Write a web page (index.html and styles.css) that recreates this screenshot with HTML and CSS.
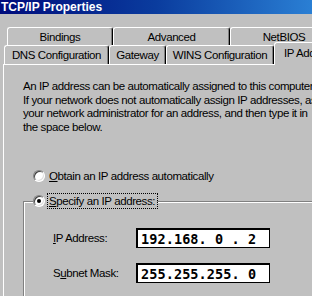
FILE: index.html
```html
<!DOCTYPE html>
<html lang="en">
<head>
  <meta charset="UTF-8" />
  <title>TCP/IP Properties</title>
  <link rel="stylesheet" href="styles.css">
</head>
<body>

  <div class="window">
    <div class="titlebar">TCP/IP Properties</div>

    <div class="tabs">
      <div class="tab-row back">
        <div class="tab tab-bindings">Bindings</div>
        <div class="tab tab-advanced">Advanced</div>
        <div class="tab tab-netbios">NetBIOS</div>
      </div>
      <div class="tab-row front">
        <div class="tab tab-dns">DNS Configuration</div>
        <div class="tab tab-gateway">Gateway</div>
        <div class="tab tab-wins">WINS Configuration</div>
        <div class="tab tab-ip active">IP Address</div>
      </div>
    </div>

    <div class="panel">
      <p class="intro">
        An IP address can be automatically assigned to this computer.<br>
        If your network does not automatically assign IP addresses, ask<br>
        your network administrator for an address, and then type it in<br>
        the space below.
      </p>

      <div class="option">
        <span class="radio"></span>
        <span class="option-label"><u>O</u>btain an IP address automatically</span>
      </div>

      <fieldset class="group">
        <legend class="option">
          <span class="radio checked"></span>
          <span class="option-label focused"><u>S</u>pecify an IP address:</span>
        </legend>

        <div class="field">
          <label><u>I</u>P Address:</label>
          <input class="ip" type="text" value="192.168. 0 . 2">
        </div>
        <div class="field">
          <label>S<u>u</u>bnet Mask:</label>
          <input class="ip" type="text" value="255.255.255. 0">
        </div>
      </fieldset>
    </div>
  </div>

</body>
</html>
```

FILE: styles.css
```css
html, body {
  margin: 0;
  overflow: hidden;
}

body {
  background: #c0c0c0;
  font-family: "Liberation Sans", Arial, sans-serif;
  font-size: 11.5px;
  letter-spacing: -0.4px;
  color: #000;
}

.window {
  width: 312px;
  height: 296px;
  overflow: hidden;
}

.titlebar {
  height: 14px;
  padding-left: 1px;
  background: linear-gradient(90deg, #000c7c, #0a3c9e 50%, #2a7fd4);
  color: #fff;
  font: bold 12px "Liberation Sans", Arial, sans-serif;
  letter-spacing: 0;
  line-height: 15px;
  white-space: nowrap;
}

/* tabs */
.tabs {
  margin-top: 13px;
}

.tab-row {
  display: flex;
  height: 18px;
}

.tab-row.back { padding-left: 7px; }
.tab-row.front { padding-left: 4px; height: 19px; }

.tab {
  flex: none;
  box-sizing: border-box;
  display: flex;
  align-items: center;
  justify-content: center;
  border-top: 1px solid #fff;
  border-left: 1px solid #fff;
  border-right: 1px solid #000;
  border-radius: 3px 3px 0 0;
  box-shadow: inset -1px 0 #808080;
  white-space: nowrap;
}

.tab-bindings { width: 106px; }
.tab-advanced { width: 117px; }
.tab-netbios { width: 108px; }
.tab-dns { width: 105px; }
.tab-gateway { width: 57px; }
.tab-wins { width: 108px; }
.tab-ip { width: 100px; }

.tab.active {
  position: relative;
  z-index: 1;
  height: 23px;
  margin-top: -3px;
  padding: 0 0 2px 9px;
  justify-content: flex-start;
  background: #c0c0c0;
}

/* page */
.panel {
  border-top: 1px solid #fff;
  border-left: 1px solid #fff;
  margin-left: 3px;
  padding-left: 19px;
}

.intro {
  margin: 0;
  padding-top: 15px;
  line-height: 13.5px;
  white-space: nowrap;
}

.option {
  display: flex;
  align-items: center;
  gap: 4px;
  height: 16px;
  margin: 34px 0 0 10px;
  white-space: nowrap;
}

.radio {
  position: relative;
  flex: none;
  width: 12px;
  height: 12px;
  box-sizing: border-box;
  border: 1px solid;
  border-color: #808080 #fff #fff #808080;
  border-radius: 50%;
  background: #fff;
  box-shadow: inset 1px 1px #404040, inset -1px -1px #dfdfdf;
}

.radio.checked::after {
  content: "";
  position: absolute;
  left: 3px;
  top: 3px;
  width: 4px;
  height: 4px;
  border-radius: 50%;
  background: #000;
}

.option-label.focused {
  padding: 0 2px 0 1px;
  outline: 1px dotted #000;
  line-height: 14px;
  margin-left: -1px;
}

.group {
  margin: 9px 0 0 0;
  padding: 19px 0 20px 9px;
  min-width: 0;
  border: none;
  border-top: 1px solid #808080;
  border-left: 1px solid #808080;
  box-shadow: inset 1px 1px #fff;
}

.group legend.option {
  margin: 0;
  padding: 0;
  background: #c0c0c0;
}

.field {
  display: flex;
  align-items: center;
  height: 20px;
  margin-left: 20px;
}

.field + .field {
  margin-top: 15px;
}

.field label {
  width: 83px;
}

.ip {
  width: 134px;
  height: 20px;
  box-sizing: border-box;
  margin: 0;
  padding: 0 0 0 3px;
  border: 1px solid #000;
  border-width: 2px 1px 1px 2px;
  background: #fff;
  font: bold 13.5px "DejaVu Sans Mono", "Liberation Mono", monospace;
  letter-spacing: 0.1px;
  color: #000;
}
```
